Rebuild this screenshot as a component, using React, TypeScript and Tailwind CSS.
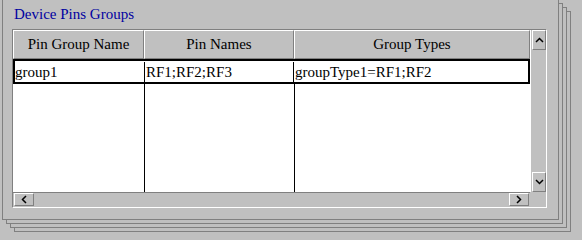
import React from "react";

const font = { fontFamily: '"Liberation Serif", "Times New Roman", serif' };

function UpArrow() {
  return (
    <svg width="9" height="6" viewBox="0 0 9 6">
      <polyline points="1,5 4.5,1.5 8,5" fill="none" stroke="#000" strokeWidth="1.5" />
    </svg>
  );
}
function DownArrow() {
  return (
    <svg width="9" height="6" viewBox="0 0 9 6">
      <polyline points="1,1 4.5,4.5 8,1" fill="none" stroke="#000" strokeWidth="1.5" />
    </svg>
  );
}
function LeftArrow() {
  return (
    <svg width="6" height="9" viewBox="0 0 6 9">
      <polyline points="5,1 1.5,4.5 5,8" fill="none" stroke="#000" strokeWidth="1.5" />
    </svg>
  );
}
function RightArrow() {
  return (
    <svg width="6" height="9" viewBox="0 0 6 9">
      <polyline points="1,1 4.5,4.5 1,8" fill="none" stroke="#000" strokeWidth="1.5" />
    </svg>
  );
}

const btn =
  "flex items-center justify-center bg-[#c0c0c0] border border-t-white border-l-white border-r-[#808080] border-b-[#808080]";

export default function App() {
  return (
    <div className="relative w-[582px] h-[240px] overflow-hidden bg-[#c0c0c0]" style={font}>
      <div className="absolute left-[14px] top-[11px] w-[557px] h-[221px] border border-[#808080] bg-[#c0c0c0]" />
      <div className="absolute left-[10px] top-[7px] w-[557px] h-[221px] border border-[#808080] bg-[#c0c0c0]" />
      <div className="absolute left-[6px] top-[3px] w-[557px] h-[221px] border border-[#808080] bg-[#c0c0c0]" />
      <div className="absolute left-[2px] top-[-1px] w-[557px] h-[221px] border border-[#808080] bg-[#c0c0c0] flex flex-col">
        <div className="ml-[11px] mt-[6px] text-[15px] leading-[17px] text-[#0000a0]">Device Pins Groups</div>
        <div className="ml-[9px] mt-[6px] w-[535px] h-[179px] border border-t-[#808080] border-l-[#808080] border-r-white border-b-white flex">
          <div className="w-[517px] flex flex-col">
            <div className="h-[29px] flex text-[15px] leading-[17px] text-black">
              <div className="w-[131px] flex items-center justify-center border border-t-white border-l-white border-r-[#808080] border-b-[#808080]">Pin Group Name</div>
              <div className="w-[150px] flex items-center justify-center border border-t-white border-l-white border-r-[#808080] border-b-[#808080]">Pin Names</div>
              <div className="flex-1 flex items-center justify-center border border-t-white border-l-white border-r-[#808080] border-b-[#808080]">Group Types</div>
            </div>
            <div className="h-[133px] bg-white flex flex-col text-[15px] text-black">
              <div className="h-[25px] border-2 border-black flex leading-[21px] pt-[1px]">
                <div className="w-[130px] border-r border-black whitespace-nowrap">group1</div>
                <div className="w-[149px] border-r border-black pl-[1px] whitespace-nowrap">RF1;RF2;RF3</div>
                <div className="flex-1 pl-[1px] whitespace-nowrap">groupType1=RF1;RF2</div>
              </div>
              <div className="flex-1 flex">
                <div className="w-[132px] border-r border-black" />
                <div className="w-[150px] border-r border-black" />
                <div className="flex-1" />
              </div>
            </div>
            <div className="h-[15px] border-t border-[#808080] flex items-stretch justify-between px-[1px] pb-[1px]">
              <div className={`w-[20px] ${btn}`}><LeftArrow /></div>
              <div className={`w-[20px] ${btn}`}><RightArrow /></div>
            </div>
          </div>
          <div className="flex-1 flex flex-col">
            <div className="h-[162px] border-l border-white flex flex-col pl-[1px]">
              <div className={`h-[20px] ${btn}`}><UpArrow /></div>
              <div className="flex-1" />
              <div className={`h-[20px] ${btn}`}><DownArrow /></div>
            </div>
            <div className="flex-1" />
          </div>
        </div>
      </div>
    </div>
  );
}
